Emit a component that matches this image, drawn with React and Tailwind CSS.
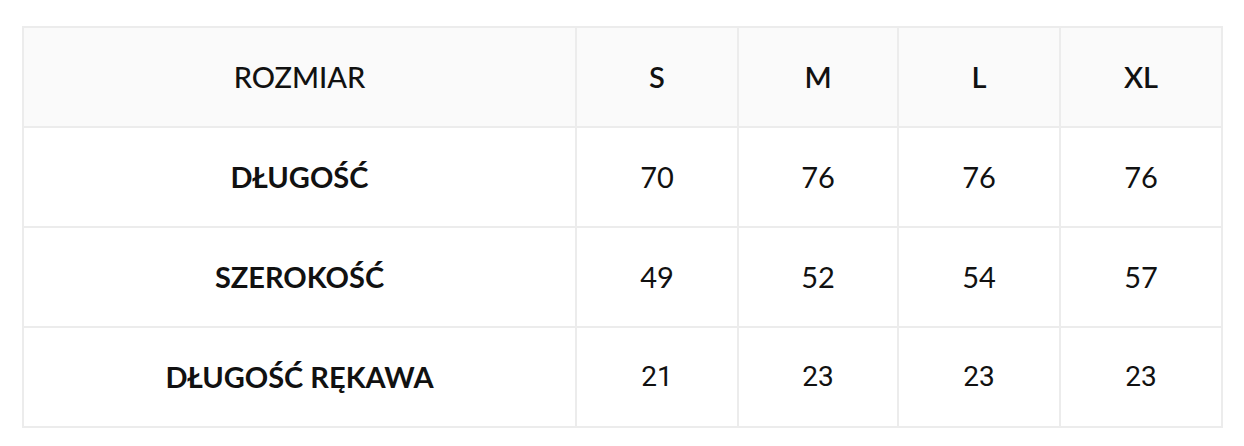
const sizes = ['S', 'M', 'L', 'XL'];

const rows = [
  { label: 'DŁUGOŚĆ', values: ['70', '76', '76', '76'] },
  { label: 'SZEROKOŚĆ', values: ['49', '52', '54', '57'] },
  { label: 'DŁUGOŚĆ RĘKAWA', values: ['21', '23', '23', '23'], alt: true },
];

const cell = 'border-2 border-[#ececec] h-[100px] text-center align-middle';

export default function App() {
  return (
    <div className="bg-white w-[1244px] h-[446px] pt-[26px] pl-[22px] font-['Lato',sans-serif] text-[#111] text-[29px]">
      <table className="border-collapse table-fixed w-[1199px]">
        <colgroup>
          <col className="w-[553px]" />
          <col className="w-[162px]" />
          <col className="w-[160px]" />
          <col className="w-[162px]" />
          <col className="w-[162px]" />
        </colgroup>
        <thead>
          <tr className="bg-[#fafafa]">
            <th className={`${cell} font-medium`}>ROZMIAR</th>
            {sizes.map((s) => (
              <th key={s} className={`${cell} font-semibold`}>
                {s}
              </th>
            ))}
          </tr>
        </thead>
        <tbody>
          {rows.map((row) => (
            <tr key={row.label}>
              <td className={`${cell} font-bold`}>{row.label}</td>
              {row.values.map((v, i) => (
                <td
                  key={i}
                  className={`${cell} ${row.alt ? "font-['Roboto',sans-serif] text-[28px]" : ''}`}
                >
                  {v}
                </td>
              ))}
            </tr>
          ))}
        </tbody>
      </table>
    </div>
  );
}
